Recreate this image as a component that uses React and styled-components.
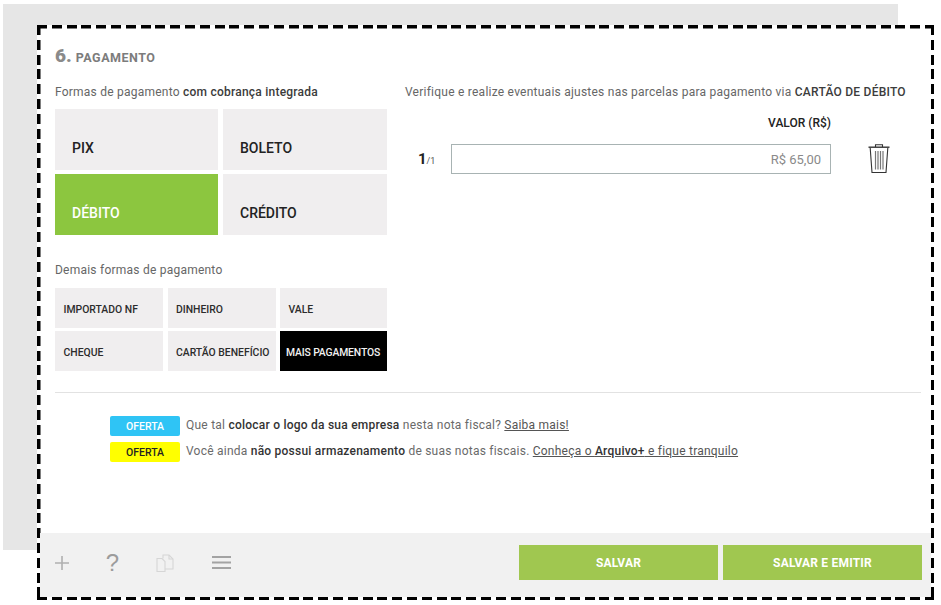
import React from "react";
import styled, { createGlobalStyle } from "styled-components";

const Global = createGlobalStyle`
  html, body { margin: 0; padding: 0; background: #fff; }
  * { box-sizing: border-box; }
  body { font-family: Roboto, "Liberation Sans", sans-serif; }
`;

const Page = styled.div`
  position: relative;
  width: 941px;
  height: 605px;
  padding: 25px 7px 5px 37px;
  overflow: hidden;
`;
const Backdrop = styled.div`
  position: absolute;
  left: 3px;
  top: 4px;
  width: 895px;
  height: 546px;
  background: #e6e6e6;
`;
const Frame = styled.section`
  position: relative;
  width: 897px;
  height: 575px;
  display: flex;
  flex-direction: column;
  padding: 3px;
  background-color: #fff;
  background-image:
    repeating-linear-gradient(90deg, #000 0 10px, transparent 10px 14.8px),
    repeating-linear-gradient(90deg, #000 0 10px, transparent 10px 14.8px),
    repeating-linear-gradient(180deg, #000 0 10px, transparent 10px 14.8px),
    repeating-linear-gradient(180deg, #000 0 10px, transparent 10px 14.8px);
  background-size: 100% 3.5px, 100% 3.5px, 3.5px 100%, 3.5px 100%;
  background-position: 0 0, 0 100%, 0 0, 100% 0;
  background-repeat: no-repeat;
`;
const Body = styled.div`
  flex: 1;
  padding: 16px 10px 0 15px;
  display: flex;
  flex-direction: column;
`;
const Title = styled.h2`
  margin: 0;
  height: 20px;
  display: flex;
  align-items: baseline;
  gap: 4px;
  color: #8a8a8a;
  font-weight: 700;
`;
const Num = styled.span`
  font-size: 19px;
  font-weight: 900;
`;
const TitleText = styled.span`
  font-size: 12.5px;
  letter-spacing: 0.5px;
  color: #7c7c7c;
`;
const Columns = styled.div`
  display: grid;
  grid-template-columns: 332px 1fr;
  column-gap: 18px;
  margin-top: 20px;
`;
const Col = styled.div`
  display: flex;
  flex-direction: column;
`;
const Label = styled.p`
  margin: 0;
  height: 16px;
  line-height: 16px;
  font-size: 12px;
  color: #666;
  letter-spacing: 0.23px;
  white-space: nowrap;
  b { font-weight: 500; color: #3c3c3c; }
`;
const BigGrid = styled.div`
  display: grid;
  grid-template-columns: 163px 164px;
  grid-auto-rows: 61px;
  gap: 4px 5px;
  margin-top: 9px;
`;
const BigTile = styled.div`
  background: ${(p) => (p.$active ? "#8cc63f" : "#f0eeef")};
  color: ${(p) => (p.$active ? "#fff" : "#222")};
  font-size: 14px;
  font-weight: 500;
  display: flex;
  align-items: center;
  padding: 17px 0 0 17px;
`;
const SmallLabel = styled(Label)`
  margin-top: 27px;
`;
const SmallGrid = styled.div`
  display: grid;
  grid-template-columns: 108px 108px 107px;
  grid-auto-rows: 40px;
  gap: 3px 4.5px;
  margin-top: 10px;
`;
const SmallTile = styled.div`
  background: ${(p) => (p.$dark ? "#000" : "#f0eeef")};
  color: ${(p) => (p.$dark ? "#f2f2f2" : "#2c2c2c")};
  font-size: 10.4px;
  font-weight: 500;
  white-space: nowrap;
  display: flex;
  align-items: center;
  padding: 2px 0 0 ${(p) => (p.$dark ? 6 : 8.5)}px;
  letter-spacing: ${(p) => (p.$dark ? -0.15 : 0)}px;
`;
const RightLabel = styled(Label)`
  letter-spacing: 0.24px;
`;
const ValueHead = styled.div`
  width: 426px;
  margin-top: 15px;
  text-align: right;
  font-size: 12px;
  font-weight: 500;
  color: #222;
  height: 16px;
  line-height: 16px;
`;
const ParcelRow = styled.div`
  display: flex;
  align-items: center;
  margin-top: 13px;
  height: 30px;
`;
const ParcelIdx = styled.div`
  width: 46px;
  padding-left: 13px;
  font-size: 15px;
  font-weight: 700;
  color: #222;
  small { font-size: 9px; font-weight: 400; color: #555; }
`;
const AmountBox = styled.div`
  width: 380px;
  height: 30px;
  border: 1px solid #a8b3b3;
  font-size: 13px;
  color: #8a8a8a;
  display: flex;
  align-items: center;
  justify-content: flex-end;
  padding-right: 9px;
`;
const TrashBtn = styled.div`
  margin-left: 36px;
  display: flex;
`;
const Divider = styled.hr`
  margin: 21px 0 0;
  border: 0;
  height: 1px;
  background: #e2e2e2;
  width: 866px;
`;
const Offers = styled.div`
  margin: 23px 0 0 55px;
  display: flex;
  flex-direction: column;
  gap: 6px;
`;
const OfferRow = styled.div`
  display: flex;
  align-items: center;
  gap: 6px;
  height: 20px;
  font-size: 12px;
  color: #6a6a6a;
  letter-spacing: 0.23px;
  white-space: nowrap;
  b { font-weight: 500; color: #333; }
  u { color: #555; }
`;
const OfferText = styled.span`
  margin-bottom: 2px;
`;
const Badge = styled.span`
  width: 70px;
  height: 20px;
  border-radius: 2px;
  background: ${(p) => p.$bg};
  color: ${(p) => p.$fg};
  font-size: 10.5px;
  font-weight: 500;
  letter-spacing: 0;
  display: flex;
  align-items: center;
  justify-content: center;
`;
const Footer = styled.footer`
  height: 64px;
  background: #f1f1f1;
  display: flex;
  align-items: center;
  padding: 0 9px 5px 15px;
`;
const Tools = styled.div`
  flex: 1;
  display: flex;
  align-items: center;
`;
const Tool = styled.div`
  width: ${(p) => p.$w}px;
  height: 30px;
  display: flex;
  align-items: center;
  justify-content: center;
  color: #9c9c9c;
  font: 400 24px "Liberation Sans", sans-serif;
`;
const Buttons = styled.div`
  display: flex;
  gap: 5px;
`;
const SaveBtn = styled.div`
  width: 199px;
  height: 35px;
  background: #a0c750;
  color: #fff;
  font-size: 12px;
  font-weight: 700;
  display: flex;
  align-items: center;
  justify-content: center;
  letter-spacing: 0.2px;
`;

const Trash = () => (
  <svg width="24" height="32" viewBox="0 0 24 32" fill="none" stroke="#333" strokeWidth="1.1">
    <path d="M8.5 4 V1.8 h7 V4" />
    <path d="M1.5 4.2 h21" strokeWidth="1.4" />
    <path d="M3.2 5 L5 29.5 h14 L20.8 5" />
    <path d="M8.5 8 V26.5 M11 8 V26.5 M13.5 8 V26.5 M16 8 V26.5" stroke="#777" strokeWidth="1.2" />
  </svg>
);
const Plus = () => (
  <svg width="14" height="14" viewBox="0 0 14 14" stroke="#b0b0b0" strokeWidth="1.6">
    <path d="M7 0 V14 M0 7 H14" />
  </svg>
);
const Copy = () => (
  <svg width="18" height="18" viewBox="0 0 18 18" fill="none" stroke="#d6d6d6" strokeWidth="1.1">
    <path d="M1 4.5 h5 l3 3 v10 H1 Z" />
    <path d="M7 4.5 V1 h6 l4 4 v10 h-8" />
    <path d="M13 1 v4 h4" />
  </svg>
);
const Menu = () => (
  <svg width="19" height="13" viewBox="0 0 19 13" stroke="#a3a3a3" strokeWidth="2">
    <path d="M0 1 H19 M0 6.5 H19 M0 12 H19" />
  </svg>
);

export default function App() {
  return (
    <Page>
      <Global />
      <Backdrop />
      <Frame>
        <Body>
          <Title>
            <Num>6.</Num>
            <TitleText>PAGAMENTO</TitleText>
          </Title>
          <Columns>
            <Col>
              <Label>
                Formas de pagamento <b>com cobrança integrada</b>
              </Label>
              <BigGrid>
                <BigTile>PIX</BigTile>
                <BigTile>BOLETO</BigTile>
                <BigTile $active>DÉBITO</BigTile>
                <BigTile>CRÉDITO</BigTile>
              </BigGrid>
              <SmallLabel>Demais formas de pagamento</SmallLabel>
              <SmallGrid>
                <SmallTile>IMPORTADO NF</SmallTile>
                <SmallTile>DINHEIRO</SmallTile>
                <SmallTile>VALE</SmallTile>
                <SmallTile>CHEQUE</SmallTile>
                <SmallTile>CARTÃO BENEFÍCIO</SmallTile>
                <SmallTile $dark>MAIS PAGAMENTOS</SmallTile>
              </SmallGrid>
            </Col>
            <Col>
              <RightLabel>
                Verifique e realize eventuais ajustes nas parcelas para pagamento via <b>CARTÃO DE DÉBITO</b>
              </RightLabel>
              <ValueHead>VALOR (R$)</ValueHead>
              <ParcelRow>
                <ParcelIdx>
                  1<small>/1</small>
                </ParcelIdx>
                <AmountBox>R$ 65,00</AmountBox>
                <TrashBtn>
                  <Trash />
                </TrashBtn>
              </ParcelRow>
            </Col>
          </Columns>
          <Divider />
          <Offers>
            <OfferRow>
              <Badge $bg="#2fc4f5" $fg="#fff">OFERTA</Badge>
              <OfferText>
                Que tal <b>colocar o logo da sua empresa</b> nesta nota fiscal? <u>Saiba mais!</u>
              </OfferText>
            </OfferRow>
            <OfferRow>
              <Badge $bg="#ffff00" $fg="#222">OFERTA</Badge>
              <OfferText>
                Você ainda <b>não possui armazenamento</b> de suas notas fiscais.{" "}
                <u>
                  Conheça o <b>Arquivo+</b> e fique tranquilo
                </u>
              </OfferText>
            </OfferRow>
          </Offers>
        </Body>
        <Footer>
          <Tools>
            <Tool $w={14}><Plus /></Tool>
            <Tool $w={87}>?</Tool>
            <Tool $w={18}><Copy /></Tool>
            <Tool $w={95}><Menu /></Tool>
          </Tools>
          <Buttons>
            <SaveBtn>SALVAR</SaveBtn>
            <SaveBtn>SALVAR E EMITIR</SaveBtn>
          </Buttons>
        </Footer>
      </Frame>
    </Page>
  );
}
